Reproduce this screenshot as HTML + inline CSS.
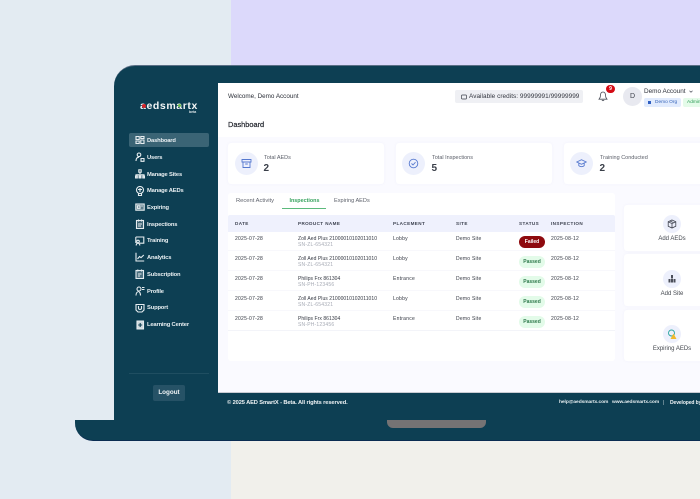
<!DOCTYPE html>
<html><head><meta charset="utf-8">
<style>
html,body{margin:0;padding:0;width:700px;height:499px;overflow:hidden;background:#e3ebf2}
*{box-sizing:border-box}
#p{position:relative;width:700px;height:499px;overflow:hidden;font-family:"Liberation Sans",sans-serif;filter:blur(.35px)}
#p div,#p svg{position:absolute}
.t{white-space:nowrap;line-height:1}
.nav{left:147px;font-size:5.800px;font-weight:bold;letter-spacing:-.17px;color:#e8eff2;white-space:nowrap;line-height:8px}
.ic{left:134.500px;width:10px;height:10px;fill:none;stroke:#e6edf0;stroke-width:1.100}
.c{background:#fff;border-radius:3px;box-shadow:0 0 3px rgba(120,120,190,.06)}
.circ{border-radius:50%;background:#edf0fc}
.cell{font-size:5px;color:#343842;white-space:nowrap;line-height:7px;letter-spacing:.25px}
.pn{font-size:5px;color:#343842;white-space:nowrap;line-height:7px;letter-spacing:.05px}
.sn{font-size:5px;color:#a7abb5;white-space:nowrap;line-height:7px;letter-spacing:.2px}
.h{font-size:4.600px;font-weight:bold;color:#3d4250;white-space:nowrap;line-height:7px;letter-spacing:.4px;top:220px}
.pb{left:519px;width:26px;height:12px;border-radius:6px;background:#e3fbe9;color:#2f7a4c;font-size:5px;font-weight:bold;text-align:center;line-height:12.500px}
.qt{font-size:6px;color:#44484f;white-space:nowrap;line-height:8px;text-align:center;width:76px;left:634px}
.ln{left:228px;width:387px;height:1px;background:#f8f8fc}
</style></head><body>
<div id="p">
<div style="left:231px;top:0;width:469px;height:65px;background:#dcd9fb"></div>
<div style="left:231px;top:441px;width:469px;height:58px;background:#f1f0eb"></div>

<div style="left:75px;top:420px;width:625px;height:21px;background:#0d3f53;border-radius:0 0 0 18px;border-bottom:1px solid #0a2c52"></div>
<div style="left:114px;top:65px;width:586px;height:356px;background:#0d3f53;border-radius:21px 0 0 0;border-top:1px solid #5b6f86"></div>
<div style="left:387px;top:420px;width:99px;height:8px;background:#757374;border-radius:0 0 6px 6px"></div>

<div style="left:218px;top:83px;width:482px;height:310px;background:#fafaff;border-bottom:1px solid #c9ccd4"></div>
<div style="left:218px;top:83px;width:482px;height:54px;background:#fff"></div>

<!-- logo -->
<div class="t" style="left:140px;top:100.500px;font-size:10.500px;font-weight:bold;letter-spacing:.6px;color:#f3f6f7">aedsmartx</div>
<div style="left:141.500px;top:103.500px;width:4px;height:4px;border-radius:50%;background:#d6252a"></div>
<div style="left:177.500px;top:103.500px;width:3.500px;height:3.500px;border-radius:50%;background:#6fc04a"></div>
<div class="t" style="left:189px;top:110.500px;font-size:3.500px;font-weight:bold;color:#dfe7ea">beta</div>

<!-- nav -->
<div style="left:129px;top:133px;width:80px;height:14px;background:#3a6475;border-radius:2px"></div>
<svg class="ic" style="top:135px" viewBox="0 0 10 10"><path d="M1 1.500h3.200v3H1zM5.800 1.500H9v2H5.800zM5.800 5H9v3.500H5.800zM1 6h3.200v2.500H1z"/></svg>
<div class="nav" style="top:136.500px">Dashboard</div>
<svg class="ic" style="top:152px" viewBox="0 0 10 10"><circle cx="4" cy="2.800" r="1.800"/><path d="M1 9c0-2.500 1.200-3.800 3-3.800M6 6.500h3v2.800H6z"/></svg>
<div class="nav" style="top:153.500px">Users</div>
<svg class="ic" style="top:169px" viewBox="0 0 10 10"><path d="M3.800.8h2.400v2.400H3.800zM5 3.200V5M1 9V5.800h8V9M5 5.800V9M.5 7h1.800v2H.5zM4 7h2v2H4zM7.800 7h1.800v2H7.800z"/></svg>
<div class="nav" style="top:170.500px">Manage Sites</div>
<svg class="ic" style="top:185.500px" viewBox="0 0 10 10"><circle cx="5" cy="4" r="3.500"/><path d="M3.500 7.500V9.500h3V7.500M3 3.500h4M5 2v4"/></svg>
<div class="nav" style="top:187px">Manage AEDs</div>
<svg class="ic" style="top:202px" viewBox="0 0 10 10"><rect x=".8" y="2" width="8.400" height="6.200" fill="#5d7d8b"/><path d="M2.500 3.800h2.500v2.500H2.500zM6.200 4h1.600"/></svg>
<div class="nav" style="top:203.500px">Expiring</div>
<svg class="ic" style="top:219px" viewBox="0 0 10 10"><rect x="1.500" y="1.500" width="7" height="8" fill="#3d6474"/><path d="M3.500.5v2M6.500.5v2M3 5h4M3 7h3"/></svg>
<div class="nav" style="top:220.500px">Inspections</div>
<svg class="ic" style="top:235.500px" viewBox="0 0 10 10"><path d="M.8 1h8v6.200h-4M.8 1v6"/><circle cx="3" cy="5.500" r="1.300"/><path d="M1.200 9.500c0-1.500.8-2.300 1.800-2.300s1.800.8 1.800 2.300"/></svg>
<div class="nav" style="top:237px">Training</div>
<svg class="ic" style="top:252px" viewBox="0 0 10 10"><path d="M1 .8V9h8.200M2.500 7l2-2.500 1.500 1.200L8.800 3"/></svg>
<div class="nav" style="top:253.500px">Analytics</div>
<svg class="ic" style="top:269px" viewBox="0 0 10 10"><rect x="1" y="1.500" width="7.500" height="8" fill="#4d7180"/><path d="M2.800.5v2M6.500.5v2M3 5h3.500M3 7h2"/></svg>
<div class="nav" style="top:270.500px">Subscription</div>
<svg class="ic" style="top:286px" viewBox="0 0 10 10"><circle cx="4" cy="3" r="2"/><path d="M1 9.500c0-2.500 1.200-4 3-4M5.500 9.500c0-1.500-.3-2.800-1.200-3.800M7 1.500h2.500M7 3.500h2.500"/></svg>
<div class="nav" style="top:287.500px">Profile</div>
<svg class="ic" style="top:302.500px" viewBox="0 0 10 10"><path d="M1 1.500h8v5.500L7 9H3L1 7zM3.500 3v2c0 1 .7 1.500 1.500 1.500S6.500 6 6.500 5V3"/></svg>
<div class="nav" style="top:304px">Support</div>
<svg class="ic" style="top:319.500px" viewBox="0 0 10 10"><path d="M2 1h6.500v8H2z" fill="#cfdade"/><path d="M5.200 3v4M3.200 5h4" stroke="#0d3f53"/></svg>
<div class="nav" style="top:321px">Learning Center</div>

<div style="left:129px;top:373px;width:80px;height:1px;background:#1f4e61"></div>
<div style="left:153px;top:385px;width:32px;height:16px;background:#265266;border-radius:2px;color:#f0f4f6;font-size:6.300px;font-weight:bold;text-align:center;line-height:16.500px">Logout</div>

<!-- header -->
<div class="t" style="left:228px;top:94px;font-size:6.300px;color:#2b2f38">Welcome, Demo Account</div>
<div style="left:455px;top:90px;width:128px;height:12.500px;background:#eff0f4;border-radius:2px"></div>
<svg style="left:460.500px;top:93.500px;width:6px;height:6px" viewBox="0 0 6 6" fill="none" stroke="#3a3e48" stroke-width=".7"><rect x=".5" y="1" width="5" height="4" rx=".8"/></svg>
<div class="t" style="left:469px;top:94px;font-size:6.400px;color:#33363f;letter-spacing:.05px">Available credits: 99999991/99999999</div>
<svg style="left:598px;top:91px;width:10px;height:11px" viewBox="0 0 10 11" fill="none" stroke="#4c505a" stroke-width=".8"><path d="M5 1C3 1 2.500 2.800 2.500 4.500 2.500 6.500 1.500 7.500 1 8.200h8C8.500 7.500 7.500 6.500 7.500 4.500 7.500 2.800 7 1 5 1zM4 9c.2 1 1.800 1 2 0"/></svg>
<div style="left:606px;top:85px;width:9px;height:7.500px;border-radius:4px;background:#d40b15;color:#fff;font-size:5px;font-weight:bold;text-align:center;line-height:8px">9</div>
<div style="left:623px;top:87px;width:19px;height:19px;border-radius:50%;background:#e8e9f0;color:#3b3f49;font-size:7px;text-align:center;line-height:20px">D</div>
<div class="t" style="left:644px;top:88.500px;font-size:6.400px;color:#30333c;">Demo Account</div>
<svg style="left:689px;top:89.500px;width:4px;height:3px" viewBox="0 0 4 3" fill="none" stroke="#4c505a" stroke-width=".7"><path d="M.5.7L2 2.200 3.500.7"/></svg>
<div style="left:644px;top:98px;width:37px;height:8.500px;background:#e1ebfd;border-radius:2px;color:#3563b8;font-size:4.800px;line-height:9px;padding-left:11px;white-space:nowrap">Demo Org</div>
<div style="left:647.500px;top:100.500px;width:3.500px;height:3px;background:#2f5fc2"></div>
<div style="left:683px;top:98px;width:20px;height:8.500px;background:#e4fbe9;border-radius:2px;color:#2e9c57;font-size:4.800px;line-height:9px;padding-left:4px;white-space:nowrap">Admin</div>

<div class="t" style="left:228px;top:120.500px;font-size:7.400px;color:#23262e;-webkit-text-stroke:.2px #23262e">Dashboard</div>

<!-- stat cards -->
<div class="c" style="left:228px;top:143px;width:156px;height:41px"></div>
<div class="c" style="left:396px;top:143px;width:156px;height:41px"></div>
<div class="c" style="left:564px;top:143px;width:140px;height:41px"></div>
<div class="circ" style="left:235px;top:152px;width:23px;height:23px"></div>
<svg style="left:241px;top:158px;width:11px;height:11px" viewBox="0 0 11 11" fill="none" stroke="#5679cf" stroke-width=".9"><path d="M1 1.500h9v2.500H1zM2 4v5.500h7V4M4.200 6h2.600"/></svg>
<div class="t" style="left:264px;top:155.500px;font-size:5.500px;color:#5b5f69">Total AEDs</div>
<div class="t" style="left:263.500px;top:164px;font-size:10px;font-weight:bold;color:#3a3f49">2</div>
<div class="circ" style="left:402px;top:152px;width:23px;height:23px"></div>
<svg style="left:408px;top:158px;width:11px;height:11px" viewBox="0 0 11 11" fill="none" stroke="#5679cf" stroke-width=".9"><circle cx="5.500" cy="5.500" r="4.300"/><path d="M3.500 5.500l1.500 1.500 2.500-2.800"/></svg>
<div class="t" style="left:432px;top:155.500px;font-size:5.500px;color:#5b5f69">Total Inspections</div>
<div class="t" style="left:431.500px;top:164px;font-size:10px;font-weight:bold;color:#3a3f49">5</div>
<div class="circ" style="left:570px;top:152px;width:23px;height:23px"></div>
<svg style="left:576px;top:158px;width:11px;height:11px" viewBox="0 0 11 11" fill="none" stroke="#5679cf" stroke-width=".9"><path d="M.8 4l4.700-2.300L10.200 4 5.500 6.300zM2.800 5.200v2.500c1.500 1.300 4 1.300 5.400 0V5.200"/></svg>
<div class="t" style="left:600px;top:155.500px;font-size:5.500px;color:#5b5f69">Training Conducted</div>
<div class="t" style="left:599.500px;top:164px;font-size:10px;font-weight:bold;color:#3a3f49">2</div>

<!-- main panel -->
<div style="left:228px;top:193px;width:387px;height:168px;background:#fff;border-radius:3px"></div>
<div class="t" style="left:236px;top:199px;font-size:5.800px;color:#5f636d">Recent Activity</div>
<div class="t" style="left:289.500px;top:199px;font-size:5.400px;color:#38a35f;font-weight:bold">Inspections</div>
<div style="left:282px;top:208px;width:44px;height:1.200px;background:#5cba7c"></div>
<div class="t" style="left:334px;top:199px;font-size:5.600px;color:#5f636d">Expiring AEDs</div>

<div style="left:228px;top:215px;width:387px;height:17px;background:#eff1fd;border-radius:2px 2px 0 0"></div>
<div class="h" style="left:235px">DATE</div>
<div class="h" style="left:298px">PRODUCT NAME</div>
<div class="h" style="left:393px">PLACEMENT</div>
<div class="h" style="left:456px">SITE</div>
<div class="h" style="left:519px">STATUS</div>
<div class="h" style="left:551px">INSPECTION</div>

<div class="ln" style="top:250px"></div>
<div class="ln" style="top:270px"></div>
<div class="ln" style="top:290px"></div>
<div class="ln" style="top:310px"></div>
<div class="ln" style="top:330px;background:#f3f4f9"></div>

<div class="cell" style="left:235px;top:235.500px">2025-07-28</div><div class="pn" style="left:298px;top:235.500px">Zoll Aed Plus 21000010102011010</div><div class="sn" style="left:298px;top:241.500px">SN-ZL-654321</div><div class="cell" style="left:393px;top:235.500px">Lobby</div><div class="cell" style="left:456px;top:235.500px">Demo Site</div><div class="cell" style="left:551px;top:235.500px">2025-08-12</div>
<div class="cell" style="left:235px;top:255.500px">2025-07-28</div><div class="pn" style="left:298px;top:255.500px">Zoll Aed Plus 21000010102011010</div><div class="sn" style="left:298px;top:261.500px">SN-ZL-654321</div><div class="cell" style="left:393px;top:255.500px">Lobby</div><div class="cell" style="left:456px;top:255.500px">Demo Site</div><div class="cell" style="left:551px;top:255.500px">2025-08-12</div>
<div class="cell" style="left:235px;top:275.500px">2025-07-28</div><div class="pn" style="left:298px;top:275.500px">Philips Frx 861304</div><div class="sn" style="left:298px;top:281.500px">SN-PH-123456</div><div class="cell" style="left:393px;top:275.500px">Entrance</div><div class="cell" style="left:456px;top:275.500px">Demo Site</div><div class="cell" style="left:551px;top:275.500px">2025-08-12</div>
<div class="cell" style="left:235px;top:295.500px">2025-07-28</div><div class="pn" style="left:298px;top:295.500px">Zoll Aed Plus 21000010102011010</div><div class="sn" style="left:298px;top:301.500px">SN-ZL-654321</div><div class="cell" style="left:393px;top:295.500px">Lobby</div><div class="cell" style="left:456px;top:295.500px">Demo Site</div><div class="cell" style="left:551px;top:295.500px">2025-08-12</div>
<div class="cell" style="left:235px;top:315.500px">2025-07-28</div><div class="pn" style="left:298px;top:315.500px">Philips Frx 861304</div><div class="sn" style="left:298px;top:321.500px">SN-PH-123456</div><div class="cell" style="left:393px;top:315.500px">Entrance</div><div class="cell" style="left:456px;top:315.500px">Demo Site</div><div class="cell" style="left:551px;top:315.500px">2025-08-12</div>

<div class="pb" style="top:235.500px;background:#8e0a0e;color:#fff">Failed</div>
<div class="pb" style="top:255.500px">Passed</div>
<div class="pb" style="top:275.500px">Passed</div>
<div class="pb" style="top:295.500px">Passed</div>
<div class="pb" style="top:315.500px">Passed</div>

<!-- quick actions -->
<div class="c" style="left:624px;top:205px;width:80px;height:46px"></div>
<div class="c" style="left:624px;top:254px;width:80px;height:52px"></div>
<div class="c" style="left:624px;top:310px;width:80px;height:51px"></div>
<div class="circ" style="left:663px;top:215px;width:18px;height:18px"></div>
<svg style="left:667px;top:219px;width:10px;height:10px" viewBox="0 0 10 10" fill="none" stroke="#3f434e" stroke-width=".8"><path d="M5 1l3.800 1.800v4.400L5 9 1.200 7.200V2.800zM1.200 2.800L5 4.600l3.800-1.800M5 4.600V9M3 2l3.800 1.800"/></svg>
<div class="qt" style="top:234.500px">Add AEDs</div>
<div class="circ" style="left:663px;top:270px;width:18px;height:18px"></div>
<svg style="left:667px;top:274px;width:10px;height:10px" viewBox="0 0 10 10" fill="#4a4e59"><path d="M4 1h2v3.500H4zM1.500 5h2v3.500h-2zM4 5h2v3.500H4zM6.500 5h2v3.500h-2z"/></svg>
<div class="qt" style="top:289.500px">Add Site</div>
<div class="circ" style="left:663px;top:325px;width:18px;height:18px"></div>
<svg style="left:667px;top:329px;width:11px;height:11px" viewBox="0 0 11 11"><circle cx="4.500" cy="4" r="3" fill="none" stroke="#2ba6a0" stroke-width=".9"/><path d="M6.500 4.500L9.500 10h-6z" fill="#f0b92e"/></svg>
<div class="qt" style="top:344.500px">Expiring AEDs</div>

<!-- footer -->
<div class="t" style="left:227px;top:400.500px;font-size:5.700px;font-weight:bold;letter-spacing:-.1px;color:#eef3f5">© 2025 AED SmartX - Beta. All rights reserved.</div>
<div class="t" style="left:559px;top:401px;font-size:4.900px;font-weight:bold;letter-spacing:-.08px;color:#e4ecef">help@aedsmartx.com</div>
<div class="t" style="left:612px;top:401px;font-size:4.900px;font-weight:bold;letter-spacing:-.08px;color:#e4ecef">www.aedsmartx.com</div>
<div class="t" style="left:663px;top:401px;font-size:5px;color:#cfdade">|</div>
<div class="t" style="left:670px;top:401px;font-size:5px;font-weight:bold;letter-spacing:-.1px;color:#eef3f5">Developed by</div>
</div>
</body></html>
